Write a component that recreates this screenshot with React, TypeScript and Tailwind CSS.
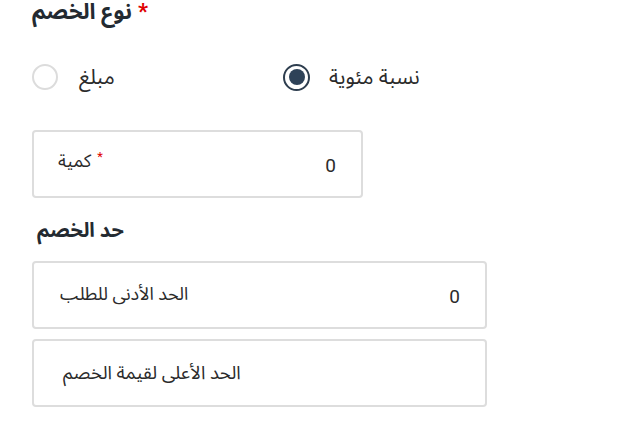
import React from "react";

function Radio({ checked }: { checked: boolean }) {
  return checked ? (
    <span className="flex h-[27px] w-[27px] items-center justify-center rounded-full border-2 border-[#2e3e4f]">
      <span className="h-[16px] w-[16px] rounded-full bg-[#2e4258]" />
    </span>
  ) : (
    <span className="h-[26px] w-[26px] rounded-full border-2 border-[#dcdcdc]" />
  );
}

export default function App() {
  return (
    <div
      className="min-h-[446px] w-[620px] bg-white pl-[32px] text-[#2b2b2b]"
      style={{ fontFamily: "Roboto, 'Noto Sans Arabic', sans-serif" }}
    >
      {/* Discount type */}
      <div className="-mt-[4px] flex items-center text-[22px] font-bold leading-[32px] text-[#232a31]">
        <span>نوع الخصم</span>
        <span className="ml-[6px] text-[#e00000]">*</span>
      </div>

      <div className="mt-[35px] flex h-[28px] items-center text-[21px] leading-[28px]">
        <label className="flex w-[251px] items-center gap-[21px]">
          <Radio checked={false} />
          <span>مبلغ</span>
        </label>
        <label className="flex items-center gap-[19px]">
          <Radio checked={true} />
          <span>نسبة مئوية</span>
        </label>
      </div>

      {/* Quantity */}
      <div className="mt-[39px] flex h-[68px] w-[331px] items-center justify-between rounded-[4px] border-2 border-[#dddddd] pl-[24px] pr-[25px]">
        <span className="-mt-[6px] flex items-center text-[18px] leading-[26px]">
          كمية
          <span className="-mt-[8px] ml-[6px] text-[13px] text-[#e00000]">*</span>
        </span>
        <span className="mt-[4px] text-[19px] leading-[26px]">0</span>
      </div>

      {/* Discount limit */}
      <div className="mt-[17px] pl-[5px] text-[20px] font-bold leading-[30px] text-[#232a31]">حد الخصم</div>

      <div className="mt-[16px] flex flex-col gap-[10px]">
        <div className="flex h-[68px] w-[455px] items-center justify-between rounded-[4px] border-2 border-[#dddddd] pl-[26px] pr-[25px]">
          <span className="-mt-[3px] text-[18px] leading-[26px]">الحد الأدنى للطلب</span>
          <span className="mt-[4px] text-[19px] leading-[26px]">0</span>
        </div>
        <div className="flex h-[68px] w-[455px] items-center rounded-[4px] border-2 border-[#dddddd] pl-[29px]">
          <span className="text-[18.5px] leading-[26px]">الحد الأعلى لقيمة الخصم</span>
        </div>
      </div>
    </div>
  );
}
